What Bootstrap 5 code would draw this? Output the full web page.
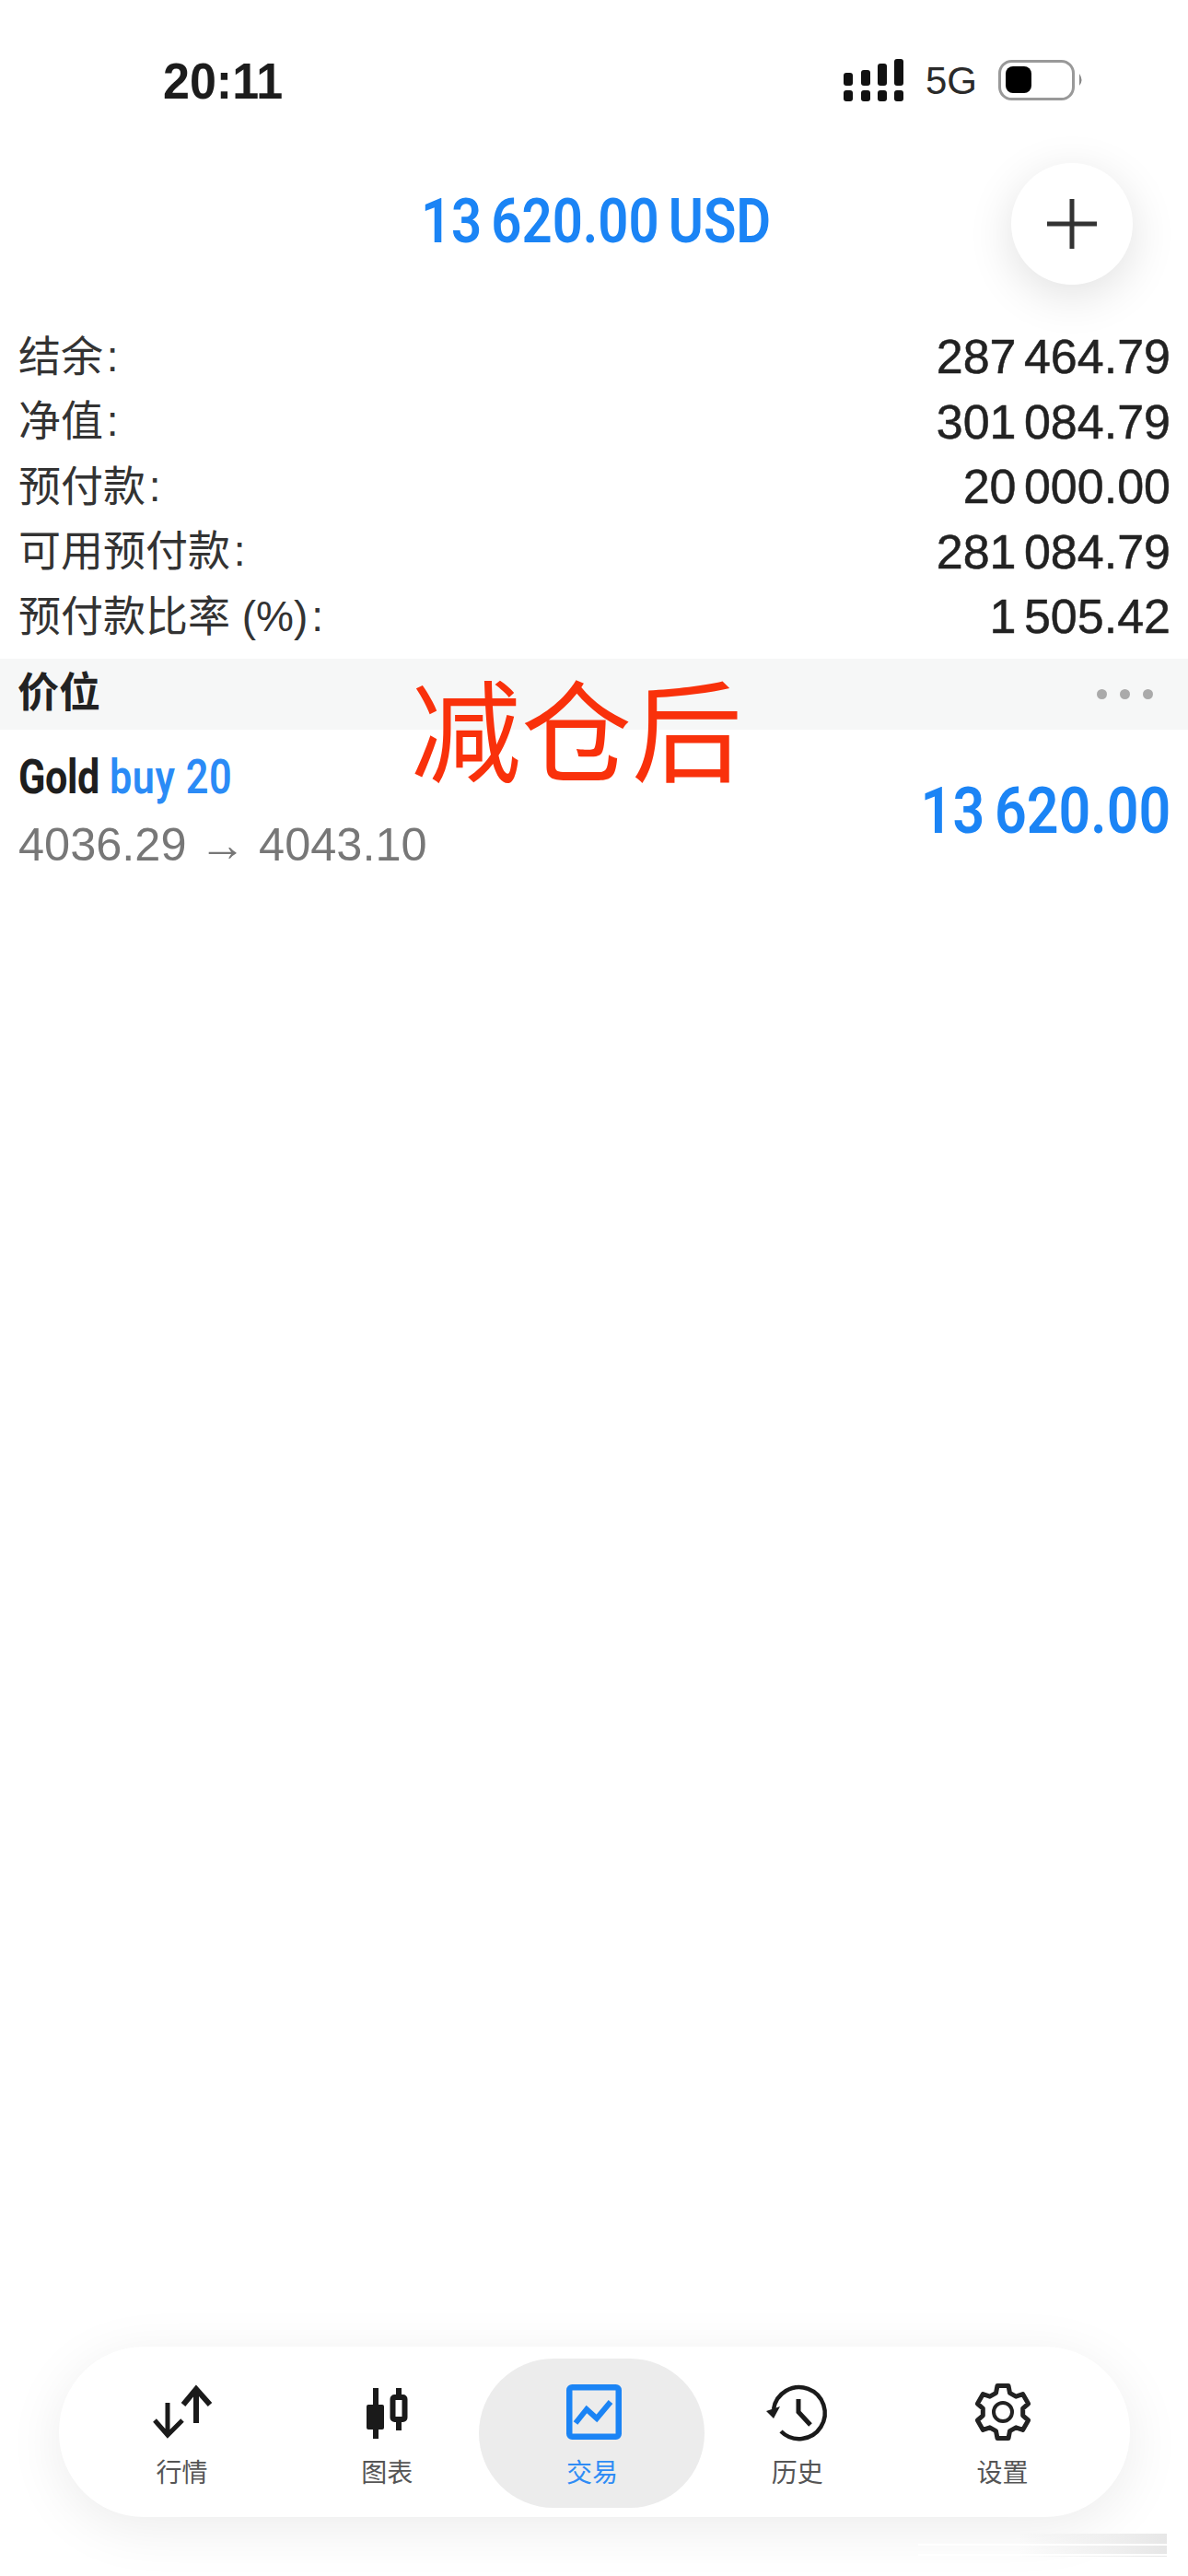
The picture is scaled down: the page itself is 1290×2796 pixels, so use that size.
<!DOCTYPE html>
<html lang="zh">
<head>
<meta charset="utf-8">
<title>交易</title>
<link href="https://cdn.jsdelivr.net/npm/bootstrap@5.3.0/dist/css/bootstrap.min.css" rel="stylesheet">
<style>
body { background:#fff; color:#222; font-family:"Liberation Sans","Noto Sans CJK SC",sans-serif; }
.app-screen { position:relative; width:1290px; overflow:hidden; }
.stat-bar { height:175px; padding:0 113px 0 177px; }
.stat-time { font-size:52px; font-weight:700; color:#1c1c1c; line-height:1; transform:scaleY(1.07); }
.stat-5g { font-size:42px; color:#2a2a2a; line-height:1; }
.stat-icons { gap:23px; }
.acct-head { position:relative; height:132px; margin-bottom:45px; padding-left:4px; }
.acct-title, .deal-profit, .deal-name { font-family:Roboto,sans-serif; display:inline-block; }
.acct-title { font-size:66px; font-weight:600; color:#1b84f5; line-height:1; word-spacing:-5px; transform:scaleX(.88); }
.fab-add { position:absolute; right:60px; top:2px; width:132px; height:132px; background:#fff; border-radius:50%; box-shadow:0 12px 50px rgba(0,0,0,.12); }
.stat-row { height:70.5px; padding:0 19px 0 20px; font-size:46px; color:#333; }
.stat-num { font-size:52px; color:#222; word-spacing:-6px; -webkit-text-stroke:.5px #222; }
.section-strip { height:77px; margin-top:10px; padding:0 20px 0 19px; background:#f6f7f7; font-size:45px; font-weight:700; color:#222; }
.strip-dots { gap:14px; padding-right:18px; }
.strip-dot { width:11px; height:11px; border-radius:50%; background:#aaa; }
.deal-row { padding:15px 19px 0 20px; }
.deal-name { font-size:52px; font-weight:700; line-height:73px; color:#1e1e1e; white-space:nowrap; letter-spacing:-.5px; transform:scaleX(.83); transform-origin:left center; }
.deal-side { color:#2b8bf6; font-weight:600; letter-spacing:.7px; margin-left:1px; }
.deal-price { font-size:50.500px; line-height:73px; color:#777; }
.deal-profit { font-size:70px; font-weight:600; color:#1b84f5; line-height:1; word-spacing:-5px; transform:scaleX(.87); transform-origin:right center; }
.stamp-note { position:absolute; left:446px; top:722px; font-size:120px; line-height:1.1; color:#f9310b; font-family:"Noto Sans CJK SC",sans-serif; white-space:nowrap; }
.tab-dock { width:1163px; height:185px; margin:auto 0 64px 64px; padding:38px 27px 0 22px; background:#fff; border-radius:92px; box-shadow:0 12px 60px rgba(0,0,0,.08); }
.tab-item { position:relative; width:223px; text-align:center; color:#555; font-size:28px; line-height:32px; }
.tab-item svg { display:block; margin:0 auto 18px; position:relative; }
.tab-item span { position:relative; }
.tab-item.is-on { color:#2f8cf5; }
.tab-item.is-on::before { content:""; position:absolute; left:-12px; top:-25px; width:245px; height:162px; border-radius:81px; background:#ececec; }
.edge-smear { position:absolute; right:23px; bottom:21px; width:270px; height:25px; background:linear-gradient(#fff,#fff) 0 11px/100% 2px no-repeat, linear-gradient(#fff,#fff) 0 22px/100% 2px no-repeat, linear-gradient(90deg,rgba(235,235,235,0) 40%,rgba(226,226,226,.85)); }
</style>
</head>
<body>
<div class="app-screen d-flex flex-column min-vh-100">
  <div class="stat-bar d-flex align-items-center justify-content-between">
    <div class="stat-time">20:11</div>
    <div class="stat-icons d-flex align-items-center">
      <svg width="66" height="48" viewBox="0 0 66 48" fill="#111"><rect x="0" y="34" width="10" height="12" rx="3"/><rect x="19" y="34" width="10" height="12" rx="3"/><rect x="37" y="34" width="10" height="12" rx="3"/><rect x="55" y="34" width="10" height="12" rx="3"/><rect x="0" y="15" width="10" height="14" rx="3"/><rect x="19" y="12" width="10" height="17" rx="3"/><rect x="37" y="5" width="10" height="24" rx="3"/><rect x="55" y="0" width="10" height="29" rx="3"/></svg>
      <div class="stat-5g">5G</div>
      <svg width="93" height="46" viewBox="0 0 93 46"><rect x="1.500" y="1.500" width="80" height="41" rx="13" fill="none" stroke="#999" stroke-width="3"/><rect x="8" y="7" width="28" height="29" rx="8" fill="#000"/><path d="M88 15 Q93 22 88 28Z" fill="#888"/></svg>
    </div>
  </div>
  <div class="acct-head d-flex align-items-center justify-content-center">
    <div class="acct-title">13 620.00 USD</div>
    <div class="fab-add d-flex align-items-center justify-content-center">
      <svg width="56" height="56" viewBox="0 0 56 56" stroke="#333" stroke-width="5"><path d="M28 1V55M1 28H55"/></svg>
    </div>
  </div>
  <div class="stat-row d-flex align-items-center justify-content-between"><span>结余&#8202;:</span><span class="stat-num">287 464.79</span></div>
  <div class="stat-row d-flex align-items-center justify-content-between"><span>净值&#8202;:</span><span class="stat-num">301 084.79</span></div>
  <div class="stat-row d-flex align-items-center justify-content-between"><span>预付款&#8202;:</span><span class="stat-num">20 000.00</span></div>
  <div class="stat-row d-flex align-items-center justify-content-between"><span>可用预付款&#8202;:</span><span class="stat-num">281 084.79</span></div>
  <div class="stat-row d-flex align-items-center justify-content-between"><span>预付款比率 (%)&#8202;:</span><span class="stat-num">1 505.42</span></div>
  <div class="section-strip d-flex align-items-center justify-content-between">
    <span>价位</span>
    <div class="strip-dots d-flex"><i class="strip-dot"></i><i class="strip-dot"></i><i class="strip-dot"></i></div>
  </div>
  <div class="deal-row d-flex align-items-center justify-content-between">
    <div>
      <div class="deal-name">Gold <span class="deal-side">buy 20</span></div>
      <div class="deal-price">4036.29 → 4043.10</div>
    </div>
    <div class="deal-profit">13 620.00</div>
  </div>
  <div class="stamp-note">减仓后</div>
  <nav class="tab-dock d-flex">
    <div class="tab-item">
      <svg width="70" height="66" viewBox="0 0 70 66" fill="none" stroke="#1a1a1a" stroke-width="5"><path d="M20 23V58M6 42L20 58L36 42"/><path stroke-width="6" d="M51 45V10M37 25L51 8L66 25"/></svg>
      <span>行情</span>
    </div>
    <div class="tab-item">
      <svg width="70" height="66" viewBox="0 0 70 66" stroke="#1a1a1a" stroke-width="6" fill="none"><path d="M23 7V62"/><rect x="13" y="25" width="19" height="27" rx="2" fill="#1a1a1a" stroke="none"/><path d="M48 7V17M48 40V53"/><rect x="41.500" y="17" width="13" height="24" rx="2"/></svg>
      <span>图表</span>
    </div>
    <div class="tab-item is-on">
      <svg width="70" height="66" viewBox="0 0 70 66" fill="none" stroke="#1b84f5" stroke-width="6.500"><rect x="10.250" y="6.250" width="53.500" height="53.500" rx="3"/><path stroke-width="6" d="M17 45L29 30L40 40L55 22"/></svg>
      <span>交易</span>
    </div>
    <div class="tab-item">
      <svg width="70" height="66" viewBox="0 0 70 66" fill="none" stroke="#1a1a1a" stroke-width="4.500"><path d="M9 30A28 28 0 1 1 17 54"/><path d="M1 32L16 27L9 40Z" fill="#1a1a1a" stroke="none"/><path stroke-width="5" d="M36 19V33L49 47"/></svg>
      <span>历史</span>
    </div>
    <div class="tab-item">
      <svg width="70" height="66" viewBox="-35 -33 70 66" fill="none" stroke="#222" stroke-width="5" stroke-linejoin="round"><path d="M-7.500 -20.700L-6 -28.400L6 -28.400L7.500 -20.700L14.180 -16.850L21.600 -19.400L27.600 -9L21.680 -3.850L21.680 3.850L27.600 9L21.600 19.400L14.180 16.850L7.500 20.700L6 28.400L-6 28.400L-7.500 20.700L-14.180 16.850L-21.600 19.400L-27.600 9L-21.680 3.850L-21.680 -3.850L-27.600 -9L-21.600 -19.400L-14.180 -16.850Z"/><circle r="10" stroke-width="4"/></svg>
      <span>设置</span>
    </div>
  </nav>
  <div class="edge-smear"></div>
</div>
<script src="https://cdn.jsdelivr.net/npm/bootstrap@5.3.0/dist/js/bootstrap.bundle.min.js"></script>
</body>
</html>
